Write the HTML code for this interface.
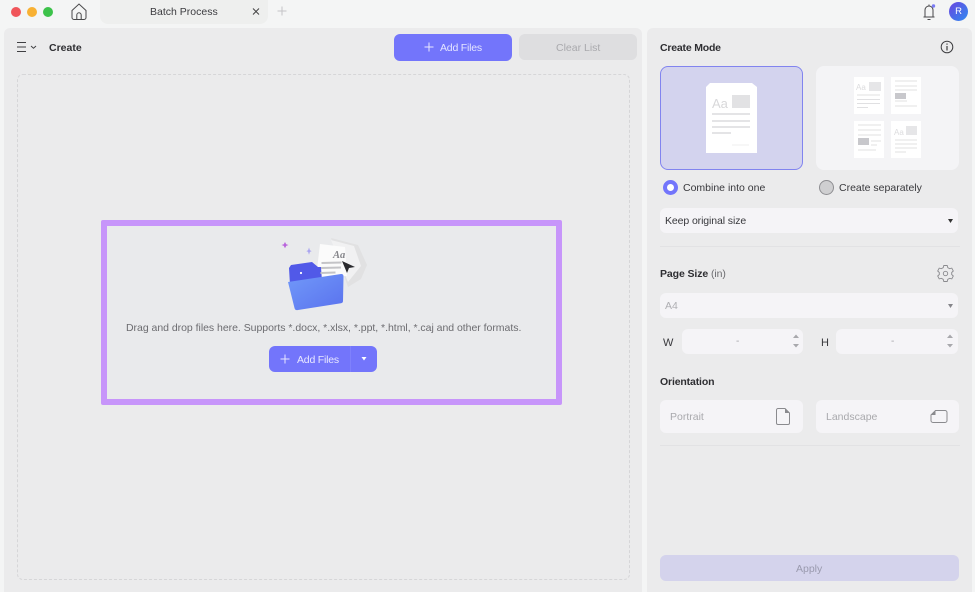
<!DOCTYPE html>
<html><head><meta charset="utf-8"><style>
*{box-sizing:border-box;margin:0;padding:0}
html,body{width:975px;height:592px;overflow:hidden;background:#f4f5f5;font-family:"Liberation Sans",sans-serif}
#w{position:absolute;left:0;top:0;width:975px;height:592px;filter:blur(.35px)}
.a{position:absolute}
.t{position:absolute;white-space:nowrap;line-height:14px}
.f{background:#f5f4f7;border-radius:6px;position:absolute}
</style></head><body><div id="w">
<div class="a" style="left:11px;top:7px;width:10px;height:10px;border-radius:50%;background:#f0555a"></div>
<div class="a" style="left:27px;top:7px;width:10px;height:10px;border-radius:50%;background:#f8b133"></div>
<div class="a" style="left:43px;top:7px;width:10px;height:10px;border-radius:50%;background:#3cc24a"></div>
<svg class="a" style="left:70px;top:3px" width="18" height="17" viewBox="0 0 18 17" fill="none" stroke="#48484a" stroke-width="1"><path d="M2 7.500 9 1l7 6.500v7a2 2 0 0 1-2 2H4a2 2 0 0 1-2-2z"/><path d="M6.800 16.500v-4.500a2.200 2.200 0 0 1 4.400 0v4.500"/></svg>
<div class="a" style="left:100px;top:0;width:168px;height:24px;background:#eeefee;border-radius:0 0 8px 8px"></div>
<div class="t" style="left:150px;top:5px;font-size:10.5px;color:#3c3c40">Batch Process</div>
<svg class="a" style="left:252px;top:7px" width="8" height="9" stroke="#444" stroke-width="1"><path d="M1 1.500l6 6M7 1.500l-6 6"/></svg>
<svg class="a" style="left:277px;top:6px" width="10" height="10" stroke="#c4c4c6" stroke-width="1"><path d="M5 .5v9M.5 5h9"/></svg>
<svg class="a" style="left:921px;top:2px" width="17" height="19" viewBox="0 0 17 19" fill="none" stroke="#48484a" stroke-width="1"><path d="M2.500 15h11M4 15V8a4 4 0 0 1 8 0v7M8 4V2.500M6.500 17.500h3"/><circle cx="12.500" cy="4" r="1.700" fill="#7b7cf5" stroke="none"/></svg>
<div class="a" style="left:949px;top:2px;width:19px;height:19px;border-radius:50%;background:linear-gradient(135deg,#6b45e0,#2f8bf0);color:#fff;font-size:9.5px;line-height:19px;text-align:center">R</div>

<div class="a" style="left:4px;top:28px;width:638px;height:564px;background:#ebebec;border-radius:6px 6px 0 0"></div>
<div class="a" style="left:647px;top:28px;width:325px;height:564px;background:#ebebec;border-radius:6px 6px 0 0"></div>

<svg class="a" style="left:16px;top:41px" width="22" height="12" fill="none" stroke="#3f3f42"><path d="M1 1.500h9M1 6h9M1 10.500h9" stroke-width="1.100"/><path d="M15 5l2.500 2.200L20 5" stroke-width="1"/></svg>
<div class="t" style="left:49px;top:41px;font-size:10.5px;font-weight:bold;color:#2e2e32">Create</div>

<div class="a" style="left:394px;top:34px;width:118px;height:27px;border-radius:6px;background:#7375fb"></div>
<svg class="a" style="left:424px;top:42px" width="10" height="10" stroke="#e8e8ff" stroke-width="1"><path d="M5 .5v9M.5 5h9"/></svg>
<div class="t" style="left:440px;top:41px;font-size:10.5px;color:#e4e5ff;letter-spacing:-.2px">Add Files</div>
<div class="a" style="left:519px;top:34px;width:118px;height:26px;border-radius:6px;background:#dedee0"></div>
<div class="t" style="left:556px;top:41px;font-size:10.5px;color:#a9a9ad">Clear List</div>

<div class="a" style="left:17px;top:74px;width:613px;height:506px;border:1px dashed #d6d6d8;border-radius:6px"></div>
<div class="a" style="left:101px;top:220px;width:461px;height:185px;border:6px solid #c795fa;border-radius:2px;background:#e9eaec"></div>

<svg class="a" style="left:275px;top:232px" width="100" height="84" viewBox="0 0 100 84">
<defs><linearGradient id="g" x1="0" y1="0" x2="1" y2="1"><stop offset="0" stop-color="#7199f9"/><stop offset="1" stop-color="#5a72ee"/></linearGradient></defs>
<path d="M10 10l1.200 2.300 2.300.7-2.300.9-1.200 2.300-1.200-2.300-2.300-.9 2.300-.7z" fill="#b964dc"/>
<path d="M34 15.500l.9 2.800 1.800.8-1.800.8-.9 2.800-.9-2.800-1.800-.8 1.800-.8z" fill="#a9a4f0"/>
<path d="M56 6l27 7 9 20-6 14-13 8z" fill="#e1e1e2"/>
<path d="M56 8l23 6 7 20-13 16z" fill="#f1f1f2"/>
<path d="M45 12l25 3 2 29-31 2z" fill="#fbfbfb"/>
<path d="M14 36l2-3 21-3 6 5 3 0 1 14-32 4z" fill="#5159e8"/>
<circle cx="26" cy="41" r="1.100" fill="#fff"/>
<path d="M46.500 31l20-.5M46 36l20-.5M45.500 41l15-.5" stroke="#c4c4c7" stroke-width="2" fill="none"/>
<text x="58" y="26" font-size="10.500" font-style="italic" font-weight="bold" fill="#85858a" font-family="Liberation Serif, serif">Aa</text>
<path d="M67 29l13 6-6 1-2 5z" fill="#2a2a2e"/>
<path d="M13 50l53-8c2 0 2.500 1 2.500 2.500l-.5 24.500c0 1.500-1 2-2 2.200L23 78c-2 .3-3 0-3.500-2z" fill="url(#g)"/>
</svg>

<div class="t" style="left:126px;top:321px;font-size:10.5px;color:#6c6c70;letter-spacing:-.03px">Drag and drop files here. Supports *.docx, *.xlsx, *.ppt, *.html, *.caj and other formats.</div>
<div class="a" style="left:269px;top:346px;width:108px;height:26px;border-radius:6px;background:#7375fb"></div>
<div class="a" style="left:350px;top:346px;width:1px;height:26px;background:#7f81fc"></div>
<svg class="a" style="left:280px;top:354px" width="10" height="10" stroke="#e8e8ff" stroke-width="1"><path d="M5 .5v9M.5 5h9"/></svg>
<div class="t" style="left:297px;top:353px;font-size:10.5px;color:#e8e8ff;letter-spacing:-.2px">Add Files</div>
<svg class="a" style="left:361px;top:357px" width="6" height="4"><path d="M.5 0h5L3 3.500z" fill="#fff"/></svg>

<div class="t" style="left:660px;top:41px;font-size:10.5px;font-weight:bold;color:#2e2e32;letter-spacing:-.2px">Create Mode</div>
<svg class="a" style="left:940px;top:40px" width="14" height="14" fill="none" stroke="#3d3d40" stroke-width="1"><circle cx="7" cy="7" r="5.800"/><path d="M7 6v4.500" stroke-width="1.200"/><path d="M7 3.500v1.200" stroke-width="1.200"/></svg>

<div class="a" style="left:660px;top:66px;width:143px;height:104px;border:1px solid #8184ef;border-radius:8px;background:#d3d3ee"></div>
<svg class="a" style="left:660px;top:66px" width="143" height="104">
<path d="M46 21l4-4h42l5 4v66H46z" fill="#fff"/>
<text x="52" y="42" font-size="13" fill="#d8d8da" font-family="Liberation Sans">Aa</text>
<rect x="72" y="29" width="18" height="13" fill="#e2e2e4"/>
<path d="M52 48h38M52 55h38M52 61h38M52 67h19" stroke="#dcdcde" stroke-width="1.500"/>
<path d="M72 79h17" stroke="#efefef"/>
</svg>

<div class="a" style="left:816px;top:66px;width:143px;height:104px;border-radius:8px;background:#f4f4f6"></div>
<svg class="a" style="left:816px;top:66px" width="143" height="104">
<rect x="38" y="11" width="30" height="37" fill="#fff"/>
<rect x="75" y="11" width="30" height="37" fill="#fff"/>
<rect x="38" y="55" width="30" height="37" fill="#fff"/>
<rect x="75" y="55" width="30" height="37" fill="#fff"/>
<text x="40" y="24" font-size="8" fill="#dcdcde" font-family="Liberation Sans">Aa</text>
<rect x="53" y="16" width="12" height="9" fill="#e6e6e8"/>
<path d="M41 29h23M41 33.500h23M41 37.500h23M41 41.500h11" stroke="#e0e0e2"/>
<path d="M79 15h22M79 20h22M79 24h22M79 35h12M79 40h22" stroke="#e0e0e2"/>
<rect x="79" y="27" width="11" height="6" fill="#c8c8cc"/>
<path d="M42 59h23M42 64h23M42 69h23" stroke="#e0e0e2"/>
<rect x="42" y="72" width="11" height="7" fill="#c8c8cc"/>
<path d="M55 75h10M55 79h6M42 84h18" stroke="#e0e0e2"/>
<text x="78" y="69" font-size="8" fill="#dcdcde" font-family="Liberation Sans">Aa</text>
<rect x="90" y="60" width="11" height="9" fill="#e6e6e8"/>
<path d="M79 74h22M79 78h22M79 82h22M79 86h11" stroke="#e0e0e2"/>
</svg>

<div class="a" style="left:663px;top:180px;width:15px;height:15px;border-radius:50%;background:#fff;border:4px solid #7375fb"></div>
<div class="t" style="left:683px;top:181px;font-size:10.5px;color:#38383c">Combine into one</div>
<div class="a" style="left:819px;top:180px;width:15px;height:15px;border-radius:50%;background:#cfcfd1;border:1px solid #8e8e92"></div>
<div class="t" style="left:839px;top:181px;font-size:10.5px;color:#38383c">Create separately</div>

<div class="f" style="left:660px;top:208px;width:298px;height:25px"></div>
<div class="t" style="left:665px;top:214px;font-size:10.5px;color:#38383c;letter-spacing:-.1px">Keep original size</div>
<svg class="a" style="left:948px;top:219px" width="5" height="4"><path d="M0 0h5L2.500 4z" fill="#333"/></svg>
<div class="a" style="left:660px;top:246px;width:300px;height:1px;background:#e2e2e4"></div>

<div class="t" style="left:660px;top:267px;font-size:10.5px;font-weight:bold;color:#2e2e32;letter-spacing:-.1px">Page Size <span style="font-weight:normal;color:#6c6c70">(in)</span></div>
<svg class="a" style="left:937px;top:265px" width="17" height="17" viewBox="0 0 17 17" fill="none" stroke="#8a8a8e" stroke-width=".9"><path d="M6.800 1h3.400l.6 2.200 1.800 1 2.200-.6 1.500 2.900-1.600 1.500v2l1.600 1.500-1.500 2.900-2.200-.6-1.800 1-.6 2.200H6.800l-.6-2.200-1.800-1-2.200.6L.7 11.500l1.600-1.500V8L.7 6.500l1.500-2.900 2.200.6 1.800-1z" transform="translate(0 -.5)"/><circle cx="8.500" cy="8.500" r="2.200"/></svg>

<div class="f" style="left:660px;top:293px;width:298px;height:25px"></div>
<div class="t" style="left:665px;top:299px;font-size:10.5px;color:#aeaeb2">A4</div>
<svg class="a" style="left:948px;top:304px" width="5" height="4"><path d="M0 0h5L2.500 4z" fill="#85858a"/></svg>

<div class="t" style="left:663px;top:336px;font-size:11px;color:#38383c">W</div>
<div class="f" style="left:682px;top:329px;width:121px;height:25px"></div>
<div class="t" style="left:736px;top:335px;font-size:10px;color:#a6a6aa">-</div>
<svg class="a" style="left:793px;top:334px" width="6" height="15"><path d="M0 4l3-3.500L6 4zM0 10h6l-3 3.500z" fill="#a8a8ac"/></svg>
<div class="t" style="left:821px;top:336px;font-size:11px;color:#38383c">H</div>
<div class="f" style="left:836px;top:329px;width:122px;height:25px"></div>
<div class="t" style="left:891px;top:335px;font-size:10px;color:#a6a6aa">-</div>
<svg class="a" style="left:947px;top:334px" width="6" height="15"><path d="M0 4l3-3.500L6 4zM0 10h6l-3 3.500z" fill="#a8a8ac"/></svg>

<div class="t" style="left:660px;top:375px;font-size:10.5px;font-weight:bold;color:#2e2e32;letter-spacing:-.15px">Orientation</div>
<div class="f" style="left:660px;top:400px;width:143px;height:33px"></div>
<div class="t" style="left:670px;top:410px;font-size:10.5px;color:#a9a9ad">Portrait</div>
<svg class="a" style="left:775px;top:407px" width="16" height="19" fill="none" stroke="#8a8a8e"><path d="M3 1.500h7l4.500 4.500v10a1.500 1.500 0 0 1-1.500 1.500H3a1.500 1.500 0 0 1-1.500-1.500V3A1.500 1.500 0 0 1 3 1.500z"/><path d="M10 1.500l4.500 4.500H10z" fill="#8a8a8e" stroke="none"/></svg>
<div class="f" style="left:816px;top:400px;width:143px;height:33px"></div>
<div class="t" style="left:826px;top:410px;font-size:10.5px;color:#a9a9ad">Landscape</div>
<svg class="a" style="left:930px;top:409px" width="18" height="15" fill="none" stroke="#8a8a8e"><path d="M5.500 1.500H15a2 2 0 0 1 2 2v8a2 2 0 0 1-2 2H3a2 2 0 0 1-2-2V6z"/><path d="M5.500 1.500L1 6h4.500z" fill="#8a8a8e" stroke="none"/></svg>
<div class="a" style="left:660px;top:445px;width:300px;height:1px;background:#e2e2e4"></div>

<div class="a" style="left:660px;top:555px;width:299px;height:26px;border-radius:6px;background:#d4d3ec"></div>
<div class="t" style="left:796px;top:562px;font-size:10.5px;color:#9a9aae">Apply</div>
</div></body></html>
